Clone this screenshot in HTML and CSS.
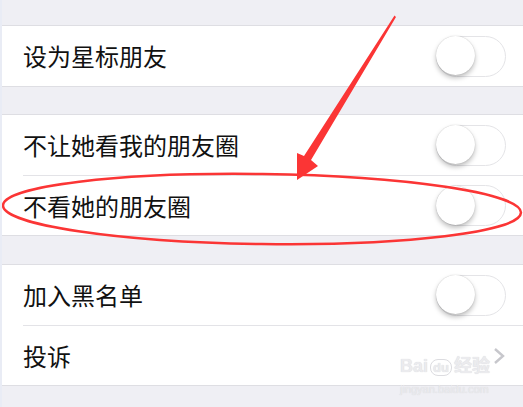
FILE: index.html
```html
<!DOCTYPE html>
<html lang="zh-CN">

<head>
    <meta charset="UTF-8">
    <meta name="viewport" content="width=device-width, initial-scale=1.0">
    <title>资料设置</title>
    <link rel="stylesheet" href="styles.css">
</head>

<body>

    <div class="page">
        <div class="group">
            <div class="cell">
                <span class="label">设为星标朋友</span>
                <span class="switch"><span class="knob"></span></span>
            </div>
        </div>

        <div class="group wide">
            <div class="cell">
                <span class="label">不让她看我的朋友圈</span>
                <span class="switch"><span class="knob"></span></span>
            </div>
            <div class="cell">
                <span class="label">不看她的朋友圈</span>
                <span class="switch"><span class="knob"></span></span>
            </div>
        </div>

        <div class="group">
            <div class="cell">
                <span class="label">加入黑名单</span>
                <span class="switch"><span class="knob"></span></span>
            </div>
            <div class="cell">
                <span class="label">投诉</span>
                <svg class="chevron" width="14" height="18" viewBox="0 0 14 18">
                    <path d="M3 2 L11 9 L3 16" fill="none" stroke="#c7c7cc" stroke-width="2.4" />
                </svg>
            </div>
        </div>

        <div class="watermark">
            <div class="wm-top">Bai<span class="wm-du">du</span>经验</div>
            <div class="wm-url">jingyan.baidu.com</div>
        </div>

        <!-- annotation drawn on top of the screenshot -->
        <svg class="marks" width="523" height="407" viewBox="0 0 523 407">
            <polygon points="394.5,15.5 396,17 311,160 318,166 297,180 297,153 304,156" fill="#fb3535" />
            <ellipse cx="262" cy="209" rx="259" ry="35" transform="rotate(0.8 262 209)" fill="none" stroke="#fb3535" stroke-width="2.5" />
        </svg>
    </div>

</body>

</html>
```

FILE: styles.css
```css
* {
    margin: 0;
    padding: 0;
    box-sizing: border-box;
}

body {
    background-color: #efeff4;
    font-family: "Noto Sans CJK SC", "Noto Sans", sans-serif;
    color: #111;
}

.page {
    position: relative;
    width: 523px;
    height: 407px;
    overflow: hidden;
    padding-top: 25px;
    border-left: 2px solid #e9ecf5;
}

.group {
    background: #fff;
    border-top: 1px solid #dedee3;
    border-bottom: 1px solid #dedee3;
    margin-bottom: 27px;
}

.group.wide {
    margin-bottom: 28px;
}

.cell {
    height: 60px;
    margin-left: 21px;
    padding-right: 17px;
    display: flex;
    align-items: center;
    justify-content: space-between;

    & + .cell {
        border-top: 1px solid #e3e3e7;
    }
}

.label {
    font-size: 24px;
    line-height: 1;
}

.switch {
    width: 70px;
    height: 41px;
    border: 1.5px solid #e4e4e7;
    border-radius: 21px;
    background: #fff;
    position: relative;
}

.knob {
    position: absolute;
    left: -1px;
    top: -0.5px;
    width: 39px;
    height: 39px;
    border-radius: 50%;
    background: #fff;
    box-shadow: 0 3px 5px rgba(0, 0, 0, 0.25), 0 0 1px rgba(0, 0, 0, 0.25);
}

.chevron {
    position: relative;
    z-index: 1;
}

.marks {
    position: absolute;
    left: -2px;
    top: 0;
    pointer-events: none;
}

.watermark {
    position: absolute;
    left: 398px;
    top: 354px;
    color: #ebebee;
    font-family: "Liberation Sans", "Noto Sans CJK SC", sans-serif;
    text-shadow: 0 0 1px #d0d0d5;
}

.wm-top {
    font-size: 18px;
    font-weight: bold;
    line-height: 24px;
}

.wm-du {
    font-size: 13px;
    border: 1px solid #dcdce0;
    border-radius: 8px;
    padding: 0 2px;
    margin: 0 2px;
}

.wm-url {
    font-size: 11px;
    line-height: 12px;
    margin-top: 3px;
}
```
